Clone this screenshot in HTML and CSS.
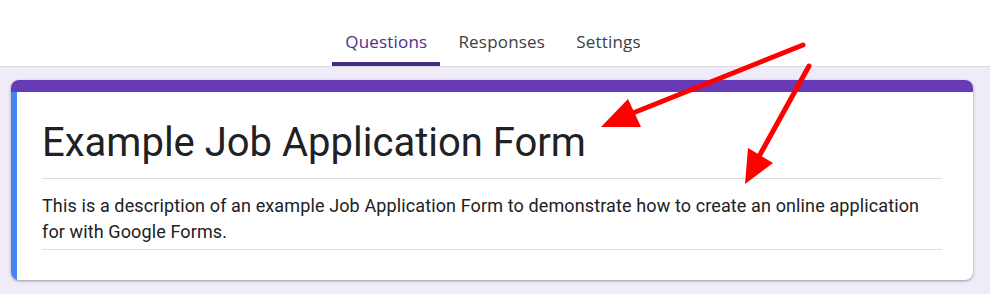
FILE: index.html
```html
<!DOCTYPE html>
<html>
<head>
<meta charset="utf-8">
<link rel="stylesheet" href="styles.css">
</head>
<body>
<header class="topbar">
  <nav class="tabs">
    <a class="tab active">Questions</a>
    <a class="tab">Responses</a>
    <a class="tab">Settings</a>
  </nav>
</header>
<main class="page">
  <section class="card">
    <div class="card-top"></div>
    <div class="card-body">
      <div class="card-stripe"></div>
      <div class="card-content">
        <h1 class="title">Example Job Application Form</h1>
        <p class="desc">This is a description of an example Job Application Form to demonstrate how to create an online application for with Google Forms.</p>
      </div>
    </div>
  </section>
</main>
<svg class="arrows" width="990" height="294" viewBox="0 0 990 294">
  <g stroke="#ff0000" stroke-width="5" stroke-linecap="round" fill="none">
    <line x1="803" y1="45" x2="628" y2="115"/>
    <line x1="809" y1="66" x2="757" y2="160"/>
  </g>
  <g fill="#ff0000">
    <polygon points="601,127 628,99 641,127"/>
    <polygon points="745,184 748,148 773,163"/>
  </g>
</svg>
</body>
</html>
```
FILE: styles.css
```css
html, body {
  margin: 0;
  padding: 0;
}
body {
  background: #f0ebf8;
  font-family: Roboto, "Liberation Sans", sans-serif;
  position: relative;
  height: 294px;
  overflow: hidden;
}
.topbar {
  background: #ffffff;
  height: 67px;
  border-bottom: 1px solid #dadce0;
  display: flex;
  justify-content: center;
  align-items: flex-end;
  box-sizing: border-box;
}
.tabs {
  display: flex;
  gap: 5px;
  padding-right: 4px;
}
.tab {
  font-family: "Open Sans", Roboto, sans-serif;
  font-size: 17px;
  font-weight: 500;
  color: #3c4043;
  padding: 0 13px;
  height: 45px;
  line-height: 41px;
  box-sizing: border-box;
  border-bottom: 4px solid transparent;
  letter-spacing: 0.2px;
}
.tab.active {
  color: #4d2f8c;
  border-bottom-color: #4a2a88;
  border-radius: 3px 3px 0 0;
}
.page {
  padding: 13px 17px 0 11px;
}
.card {
  background: #ffffff;
  border-radius: 8px;
  overflow: hidden;
  box-shadow: 0 1px 2px rgba(60, 64, 67, 0.35), 0 1px 3px 1px rgba(60, 64, 67, 0.12);
}
.card-top {
  height: 12px;
  background: #673ab7;
}
.card-body {
  display: flex;
}
.card-stripe {
  width: 6px;
  background: #4285f4;
  flex: none;
}
.card-content {
  flex: 1;
  padding: 27px 31px 30px 25px;
}
.title {
  margin: 0;
  font-weight: 400;
  font-size: 40px;
  line-height: 48px;
  color: #202124;
  padding-bottom: 11px;
  border-bottom: 1px solid #dadce0;
}
.desc {
  margin: 0;
  padding: 14px 0 4px;
  font-size: 18px;
  line-height: 26px;
  letter-spacing: 0.12px;
  color: #202124;
  border-bottom: 1px solid #dadce0;
}
.arrows {
  position: absolute;
  left: 0;
  top: 0;
  pointer-events: none;
}
```
